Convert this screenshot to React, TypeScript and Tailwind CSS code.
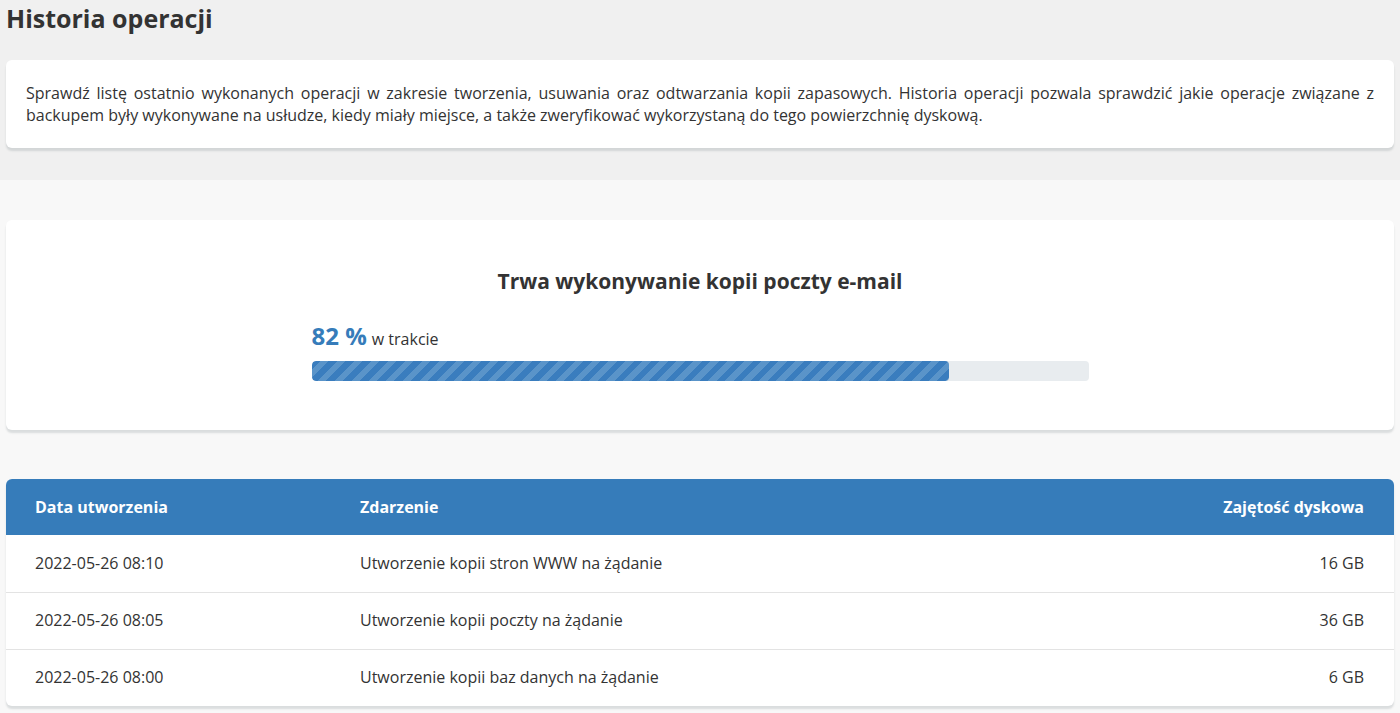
import React from 'react';

const rows = [
  { date: '2022-05-26 08:10', event: 'Utworzenie kopii stron WWW na żądanie', size: '16 GB' },
  { date: '2022-05-26 08:05', event: 'Utworzenie kopii poczty na żądanie', size: '36 GB' },
  { date: '2022-05-26 08:00', event: 'Utworzenie kopii baz danych na żądanie', size: '6 GB' },
];

export default function App() {
  const progress = 82;

  return (
    <div className="min-h-[713px] bg-[#f8f8f8] text-[#333] font-['Open_Sans',sans-serif]">
      {/* Header area */}
      <div className="bg-[#f0f0f0] px-[6px] pt-[1px] pb-8">
        <h1 className="text-[25px] font-bold leading-[34px] text-[#333]">Historia operacji</h1>
        <div className="mt-[25px] rounded-md bg-white px-5 py-[22px] shadow-[0_3px_2px_rgba(60,80,90,0.16)]">
          <p className="text-justify text-[16px] leading-[22px]">
            Sprawdź listę ostatnio wykonanych operacji w zakresie tworzenia, usuwania oraz odtwarzania kopii
            zapasowych. Historia operacji pozwala sprawdzić jakie operacje związane z backupem były wykonywane na
            usłudze, kiedy miały miejsce, a także zweryfikować wykorzystaną do tego powierzchnię dyskową.
          </p>
        </div>
      </div>

      <div className="px-[6px] pt-10">
        {/* Progress card */}
        <div className="h-[210px] rounded-md bg-white pt-[47px] shadow-[0_3px_2px_rgba(60,80,90,0.16)]">
          <h2 className="text-center text-[21px] font-bold leading-[28px]">Trwa wykonywanie kopii poczty e-mail</h2>
          <div className="mx-auto mt-[26px] w-[777px]">
            <div className="flex items-baseline gap-[5px]">
              <span className="text-[24px] font-bold leading-[30px] text-[#367cba]">{progress} %</span>
              <span className="text-[16px]">w trakcie</span>
            </div>
            <div className="mt-[10px] h-5 w-full overflow-hidden rounded-[4px] bg-[#e8ecef]">
              <div
                className="h-full rounded-[4px] bg-[#3a7dbe] bg-[repeating-linear-gradient(135deg,#3a7dbe_0px,#3a7dbe_6px,#5a94c9_6px,#5a94c9_12px)]"
                style={{ width: `${progress}%` }}
              />
            </div>
          </div>
        </div>

        {/* Table */}
        <div className="mt-[49px] overflow-hidden rounded-md bg-white shadow-[0_3px_2px_rgba(60,80,90,0.16)]">
          <div className="flex h-14 items-center bg-[#367cba] px-[29px] text-[16px] font-bold text-white">
            <div className="w-[325px]">Data utworzenia</div>
            <div className="flex-1">Zdarzenie</div>
            <div className="pr-[1px] text-right">Zajętość dyskowa</div>
          </div>
          {rows.map((r, i) => (
            <div
              key={i}
              className={`flex h-[57px] items-center px-[29px] pb-[2px] text-[16px] ${i > 0 ? 'border-t border-[#e3e3e3]' : ''}`}
            >
              <div className="w-[325px]">{r.date}</div>
              <div className="flex-1">{r.event}</div>
              <div className="pr-[1px] text-right">{r.size}</div>
            </div>
          ))}
        </div>
      </div>
    </div>
  );
}
